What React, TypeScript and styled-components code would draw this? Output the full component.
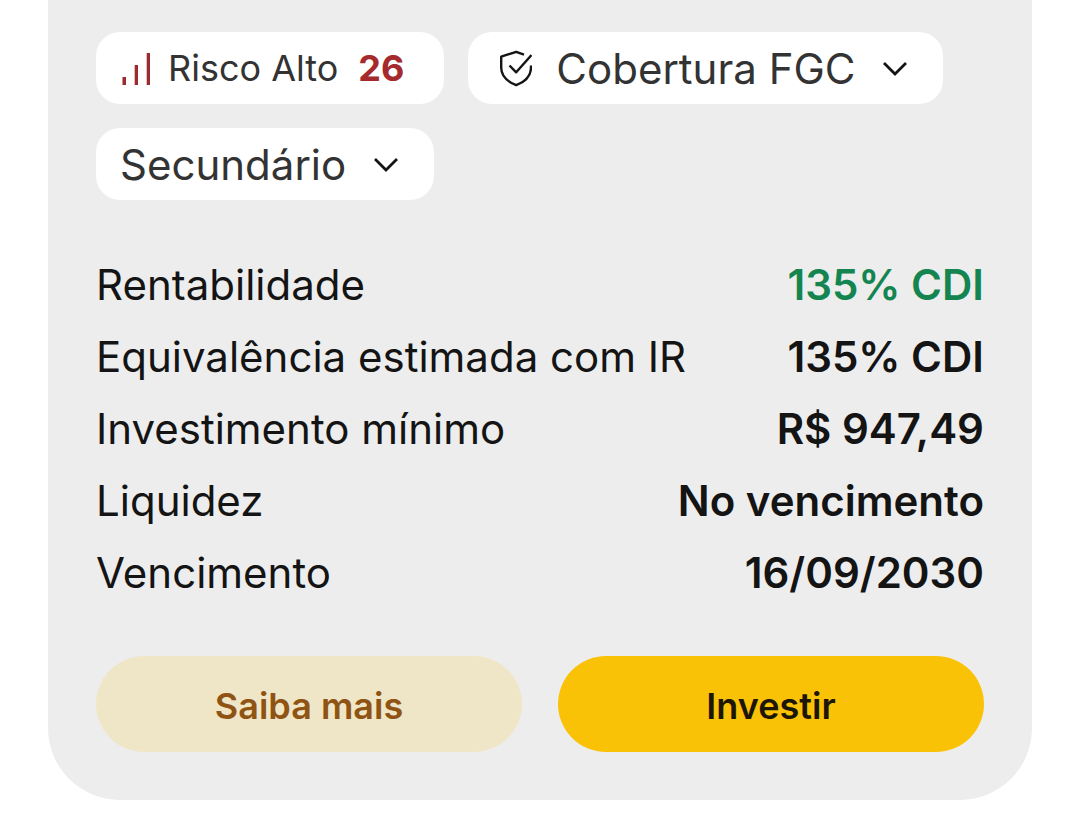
import React from "react";
import styled, { createGlobalStyle } from "styled-components";

const GlobalStyle = createGlobalStyle`
  *, *::before, *::after {
    box-sizing: border-box;
  }
  body {
    margin: 0;
    background: #ffffff;
    color: #141414;
    font-family: Inter, "Liberation Sans", sans-serif;
  }
  button {
    margin: 0;
    border: 0;
    font-family: inherit;
    cursor: pointer;
  }
`;

const Page = styled.main`
  padding: 0 48px 20px;
`;

const Card = styled.article`
  display: flex;
  flex-direction: column;
  gap: 48px;
  padding: 32px 48px 48px;
  border-radius: 0 0 72px 72px;
  background: #ededed;
`;

const Chips = styled.div`
  display: flex;
  flex-wrap: wrap;
  gap: 24px;
`;

const RiskChip = styled.div`
  display: flex;
  align-items: center;
  gap: 20px;
  height: 72px;
  padding: 0 40px 0 24px;
  border-radius: 24px;
  background: #ffffff;
  color: #333333;
  font-size: 36px;
  white-space: nowrap;
`;

const RiskLabel = styled.span`
  display: flex;
  align-items: center;
  gap: 16px;
`;

const RiskScore = styled.strong`
  color: #a52a2d;
  font-weight: 700;
`;

const SelectChip = styled.button`
  display: flex;
  align-items: center;
  gap: 24px;
  height: 72px;
  padding: 0 32px 0 24px;
  border-radius: 24px;
  background: #ffffff;
  color: #333333;
  font-size: 42px;
  white-space: nowrap;
`;

const Details = styled.dl`
  margin: 0;
`;

const DetailRow = styled.div`
  display: flex;
  align-items: center;
  justify-content: space-between;
  gap: 24px;
  min-height: 72px;
  padding-top: 2px;
  font-size: 42px;
  line-height: 48px;
`;

const Term = styled.dt`
  font-weight: 400;
`;

const Value = styled.dd<{ $positive?: boolean }>`
  margin: 0;
  color: ${(p) => (p.$positive ? "#148550" : "inherit")};
  font-weight: 600;
  text-align: right;
  white-space: nowrap;
`;

const Actions = styled.div`
  display: flex;
  gap: 36px;
`;

const ActionButton = styled.button<{ $primary?: boolean }>`
  flex: 1;
  height: 96px;
  padding: 4px 24px 0;
  border-radius: 48px;
  background: ${(p) => (p.$primary ? "#fac207" : "#efe6c8")};
  color: ${(p) => (p.$primary ? "#1d1604" : "#8f5413")};
  font-size: 36px;
  font-weight: 600;
`;

const BarsIcon = () => (
  <svg width="32" height="36" viewBox="0 0 32 36" fill="#9c2b2e" aria-hidden="true">
    <rect x="2.5" y="27" width="3.5" height="8" />
    <rect x="14.7" y="15" width="3.3" height="20" />
    <rect x="26.7" y="3" width="3.3" height="32" />
  </svg>
);

const ShieldCheckIcon = () => (
  <svg
    width="40"
    height="40"
    viewBox="0 0 40 40"
    fill="none"
    stroke="#141414"
    strokeWidth="2.4"
    strokeLinejoin="round"
    aria-hidden="true"
  >
    <path d="M32 6.6 24.200 3.800 9.200 8.600V19.600C9.200 28.500 15.500 33.800 24.200 37.200 33 33.800 39 28.500 39 19.300V17.500" />
    <path d="M17.500 17.500 24.200 24.300 39.500 7" />
  </svg>
);

const ChevronIcon = () => (
  <svg
    width="32"
    height="32"
    viewBox="0 0 32 32"
    fill="none"
    stroke="#141414"
    strokeWidth="2.8"
    aria-hidden="true"
  >
    <path d="M5 11 16 22 27 11" />
  </svg>
);

const details = [
  { term: "Rentabilidade", value: "135% CDI", positive: true },
  { term: "Equivalência estimada com IR", value: "135% CDI" },
  { term: "Investimento mínimo", value: "R$ 947,49" },
  { term: "Liquidez", value: "No vencimento" },
  { term: "Vencimento", value: "16/09/2030" },
];

export default function App() {
  return (
    <>
      <GlobalStyle />
      <Page>
        <Card>
          <Chips>
            <RiskChip>
              <RiskLabel>
                <BarsIcon />
                Risco Alto
              </RiskLabel>
              <RiskScore>26</RiskScore>
            </RiskChip>
            <SelectChip type="button" aria-haspopup="true">
              <ShieldCheckIcon />
              Cobertura FGC
              <ChevronIcon />
            </SelectChip>
            <SelectChip type="button" aria-haspopup="true">
              Secundário
              <ChevronIcon />
            </SelectChip>
          </Chips>
          <Details>
            {details.map((d) => (
              <DetailRow key={d.term}>
                <Term>{d.term}</Term>
                <Value $positive={d.positive}>{d.value}</Value>
              </DetailRow>
            ))}
          </Details>
          <Actions>
            <ActionButton type="button">Saiba mais</ActionButton>
            <ActionButton type="button" $primary>
              Investir
            </ActionButton>
          </Actions>
        </Card>
      </Page>
    </>
  );
}
